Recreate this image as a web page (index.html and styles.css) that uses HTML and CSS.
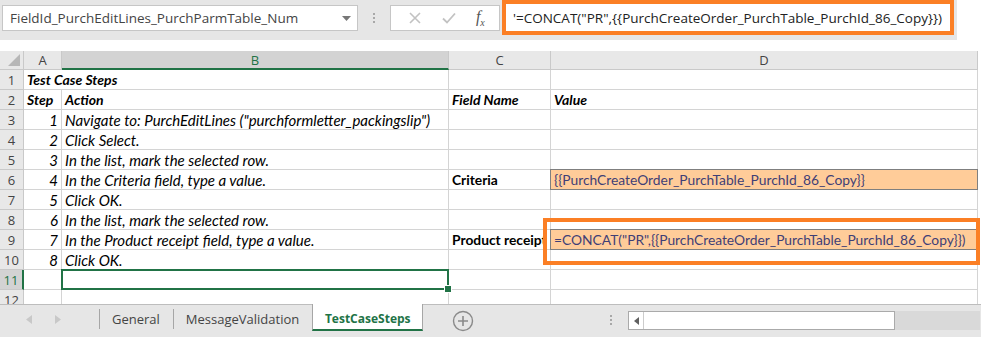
FILE: index.html
```html
<!DOCTYPE html>
<html lang="en">
<head>
    <meta charset="UTF-8">
    <title>TestCaseSteps</title>
    <link rel="stylesheet" href="styles.css">
</head>
<body>
    <div class="topbar">
        <div class="namebox">
            <span>FieldId_PurchEditLines_PurchParmTable_Num</span>
            <svg width="9" height="5" viewBox="0 0 9 5"><path d="M0 0h9L4.5 5z" fill="#777"/></svg>
        </div>
        <div class="grip"><i></i><i></i><i></i></div>
        <div class="fxbtns">
            <svg width="12" height="12" viewBox="0 0 12 12"><path d="M1 1l10 10M11 1L1 11" stroke="#c2c2c2" stroke-width="1.6"/></svg>
            <svg width="14" height="12" viewBox="0 0 14 12"><path d="M1 6.5l4 4L13 1.5" stroke="#c2c2c2" stroke-width="1.8" fill="none"/></svg>
            <span class="fx">f<sub>x</sub></span>
        </div>
        <div class="formula">'=CONCAT("PR",{{PurchCreateOrder_PurchTable_PurchId_86_Copy}})</div>
    </div>

    <div class="sheet">
        <div class="grid">
            <div class="hd corner"><svg width="12" height="12" viewBox="0 0 12 12"><path d="M12 0v12H0z" fill="#b7b7b7"/></svg></div>
            <div class="hd">A</div>
            <div class="hd active">B</div>
            <div class="hd">C</div>
            <div class="hd">D</div>

            <div class="rh">1</div>
            <div class="c bi wide">Test Case Steps</div>
            <div class="c"></div>
            <div class="c"></div>

            <div class="rh">2</div>
            <div class="c bi">Step</div>
            <div class="c bi">Action</div>
            <div class="c bi">Field Name</div>
            <div class="c bi">Value</div>

            <div class="rh">3</div>
            <div class="c i num">1</div>
            <div class="c i">Navigate to: PurchEditLines ("purchformletter_packingslip")</div>
            <div class="c"></div>
            <div class="c"></div>

            <div class="rh">4</div>
            <div class="c i num">2</div>
            <div class="c i">Click Select.</div>
            <div class="c"></div>
            <div class="c"></div>

            <div class="rh">5</div>
            <div class="c i num">3</div>
            <div class="c i">In the list, mark the selected row.</div>
            <div class="c"></div>
            <div class="c"></div>

            <div class="rh">6</div>
            <div class="c i num">4</div>
            <div class="c i">In the Criteria field, type a value.</div>
            <div class="c b">Criteria</div>
            <div class="c input">{{PurchCreateOrder_PurchTable_PurchId_86_Copy}}</div>

            <div class="rh">7</div>
            <div class="c i num">5</div>
            <div class="c i">Click OK.</div>
            <div class="c"></div>
            <div class="c"></div>

            <div class="rh">8</div>
            <div class="c i num">6</div>
            <div class="c i">In the list, mark the selected row.</div>
            <div class="c"></div>
            <div class="c"></div>

            <div class="rh">9</div>
            <div class="c i num">7</div>
            <div class="c i">In the Product receipt field, type a value.</div>
            <div class="c b">Product receipt</div>
            <div class="c input">=CONCAT("PR",{{PurchCreateOrder_PurchTable_PurchId_86_Copy}})</div>

            <div class="rh">10</div>
            <div class="c i num">8</div>
            <div class="c i">Click OK.</div>
            <div class="c"></div>
            <div class="c"></div>

            <div class="rh sel-row">11</div>
            <div class="c"></div>
            <div class="c selected"></div>
            <div class="c"></div>
            <div class="c"></div>

            <div class="rh">12</div>
            <div class="c"></div>
            <div class="c"></div>
            <div class="c"></div>
            <div class="c"></div>
        </div>
        <div class="callout"></div>
    </div>

    <div class="tabbar">
        <div class="nav">
            <svg width="6" height="9" viewBox="0 0 6 9"><path d="M6 0v9L0 4.5z" fill="#c8c8c8"/></svg>
            <svg width="6" height="9" viewBox="0 0 6 9"><path d="M0 0v9l6-4.5z" fill="#c8c8c8"/></svg>
        </div>
        <div class="tab">General</div>
        <div class="tab">MessageValidation</div>
        <div class="tab current">TestCaseSteps</div>
        <div class="add">
            <svg width="22" height="22" viewBox="0 0 22 22"><circle cx="11" cy="11" r="9.5" fill="none" stroke="#8a8a8a" stroke-width="1.4"/><path d="M11 6v10M6 11h10" stroke="#8a8a8a" stroke-width="1.6"/></svg>
        </div>
        <div class="grip small"><i></i><i></i><i></i></div>
        <div class="hscroll">
            <div class="arrow"><svg width="5" height="8" viewBox="0 0 5 8"><path d="M5 0v8L0 4z" fill="#606060"/></svg></div>
            <div class="track"></div>
        </div>
        <div class="rest"></div>
    </div>
</body>
</html>
```

FILE: styles.css
```css
*
{
    box-sizing: border-box;
    margin: 0;
    padding: 0;
}
body
{
    width: 981px;
    height: 337px;
    overflow: hidden;
    background: #fff;
    font-family: "Open Sans", "Liberation Sans", sans-serif;
}

/* formula bar */
.topbar
{
    width: 957px;
    height: 40px;
    background: #e6e6e6;
    display: flex;
    align-items: flex-start;
}
.namebox
{
    margin: 5px 0 0 2px;
    width: 356px;
    height: 26px;
    background: #fff;
    border: 1px solid #c6c6c6;
    display: flex;
    align-items: center;
    justify-content: space-between;
    padding: 0 6px 0 7px;
    font-size: 13.5px;
    color: #444;
}
.grip
{
    width: 32px;
    height: 36px;
    display: flex;
    flex-direction: column;
    align-items: center;
    justify-content: center;
    gap: 2px;
}
.grip i
{
    width: 2px;
    height: 2px;
    background: #a8a8a8;
}
.fxbtns
{
    margin-top: 5px;
    width: 110px;
    height: 26px;
    background: #fff;
    border: 1px solid #c6c6c6;
    display: flex;
    align-items: center;
    justify-content: space-around;
    padding: 0 4px 0 8px;
}
.fx
{
    font-family: "Liberation Serif", serif;
    font-style: italic;
    font-size: 16px;
    color: #555;
}
.fx sub
{
    font-size: 10px;
}
.formula
{
    margin-left: 2px;
    width: 452px;
    height: 35px;
    border: 4px solid #fb7f25;
    background: #fff;
    padding: 5px 0 0 7px;
    font-size: 13.5px;
    color: #222;
    white-space: nowrap;
    overflow: hidden;
}

/* sheet grid */
.sheet
{
    position: relative;
    margin-top: 11px;
    height: 253px;
    overflow: hidden;
}
.grid
{
    display: grid;
    grid-template-columns: 24px 38px 387px 102px 427px;
    grid-template-rows: 19px repeat(12, 20px);
    font-family: Lato, "Liberation Sans", sans-serif;
    font-size: 13.8px;
    color: #000;
}
.hd
{
    background: #e8e8e8;
    border-right: 1px solid #c9c9c9;
    border-bottom: 1px solid #c9c9c9;
    text-align: center;
    color: #444;
    font-family: "Open Sans", sans-serif;
    font-size: 13px;
    line-height: 18px;
}
.hd.corner
{
    display: flex;
    align-items: flex-end;
    justify-content: flex-end;
    padding: 0 3px 3px 0;
}
.hd.active
{
    background: #d3d3d3;
    color: #217346;
    border-bottom: 2px solid #217346;
}
.rh
{
    background: #e8e8e8;
    border-right: 1px solid #c9c9c9;
    border-bottom: 1px solid #c9c9c9;
    text-align: center;
    color: #444;
    font-family: "Open Sans", sans-serif;
    font-size: 13px;
    line-height: 20px;
}
.rh.sel-row
{
    background: #d3d3d3;
    color: #217346;
    border-right: 2px solid #217346;
}
.c
{
    border-right: 1px solid #d4d4d4;
    border-bottom: 1px solid #d4d4d4;
    padding: 0 3px;
    line-height: 20px;
    white-space: nowrap;
    overflow: hidden;
}
.c.wide
{
    grid-column: span 2;
}
.c.i
{
    font-style: italic;
    font-size: 15px;
}
.c.b
{
    font-weight: bold;
}
.c.bi
{
    font-weight: bold;
    font-style: italic;
    font-size: 14px;
}
.c.num
{
    text-align: right;
}
.c.input
{
    background: #ffcc99;
    border: 1px solid #7f7f7f;
    margin: -1px 0 0 -1px;
    color: #3f3f76;
    padding-left: 3px;
}
.c.selected
{
    position: relative;
    overflow: visible;
}
.c.selected::after
{
    content: "";
    position: absolute;
    left: -1px;
    top: -1px;
    right: -1px;
    bottom: -1px;
    border: 2px solid #217346;
}
.c.selected::before
{
    content: "";
    position: absolute;
    right: -4px;
    bottom: -4px;
    width: 6px;
    height: 6px;
    background: #217346;
    border: 1px solid #fff;
    z-index: 1;
}
.callout
{
    position: absolute;
    left: 543px;
    top: 167px;
    width: 437px;
    height: 47px;
    border: 4px solid #fb7f25;
}

/* sheet tabs */
.tabbar
{
    height: 33px;
    background: #e6e6e6;
    border-top: 1px solid #bdbdbd;
    display: flex;
    align-items: flex-start;
    font-size: 13px;
    color: #444;
}
.nav
{
    width: 100px;
    display: flex;
    align-items: center;
    gap: 23px;
    padding-left: 26px;
    border-right: 1px solid #a6a6a6;
    margin-top: 4px;
    height: 20px;
}
.tab
{
    height: 20px;
    margin-top: 4px;
    padding: 0 13px 0 12px;
    line-height: 20px;
    border-right: 1px solid #a6a6a6;
}
.tab.current
{
    margin-top: -1px;
    margin-left: -1px;
    width: 111px;
    height: 27px;
    padding: 5px 0 0;
    text-align: center;
    background: #fff;
    color: #217346;
    font-size: 12px;
    font-weight: bold;
    border-left: 1px solid #a6a6a6;
    border-right: 1px solid #a6a6a6;
    border-bottom: 2px solid #217346;
}
.add
{
    width: 80px;
    display: flex;
    justify-content: center;
    padding-top: 5px;
}
.grip.small
{
    width: 34px;
    height: 30px;
    margin-left: 91px;
}
.hscroll
{
    display: flex;
    margin-top: 6px;
    height: 19px;
    width: 267px;
    border: 1px solid #aaa;
    background: #fff;
}
.arrow
{
    width: 15px;
    border-right: 1px solid #ccc;
    display: flex;
    align-items: center;
    justify-content: center;
}
.track
{
    flex: 1;
}
.rest
{
    margin-top: 6px;
    width: 85px;
    height: 19px;
    background: #d9d9d9;
}
```
